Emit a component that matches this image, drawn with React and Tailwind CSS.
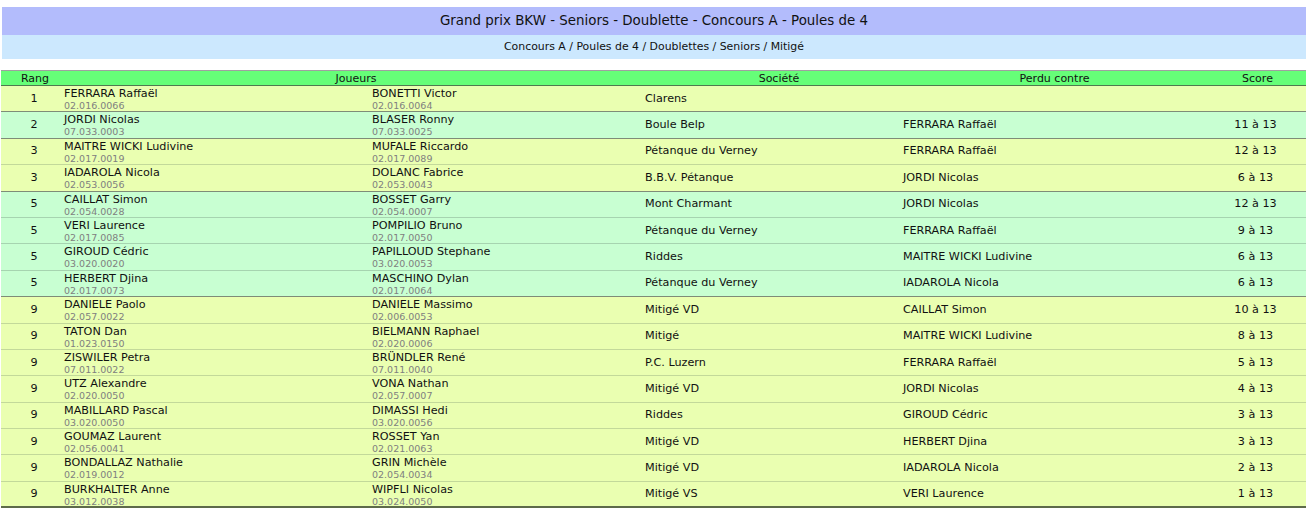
const ROWS = [
  ["1", "FERRARA Raffaël", "02.016.0066", "BONETTI Victor", "02.016.0064", "Clarens", "", ""],
  ["2", "JORDI Nicolas", "07.033.0003", "BLASER Ronny", "07.033.0025", "Boule Belp", "FERRARA Raffaël", "11 à 13"],
  ["3", "MAITRE WICKI Ludivine", "02.017.0019", "MUFALE Riccardo", "02.017.0089", "Pétanque du Verney", "FERRARA Raffaël", "12 à 13"],
  ["3", "IADAROLA Nicola", "02.053.0056", "DOLANC Fabrice", "02.053.0043", "B.B.V. Pétanque", "JORDI Nicolas", "6 à 13"],
  ["5", "CAILLAT Simon", "02.054.0028", "BOSSET Garry", "02.054.0007", "Mont Charmant", "JORDI Nicolas", "12 à 13"],
  ["5", "VERI Laurence", "02.017.0085", "POMPILIO Bruno", "02.017.0050", "Pétanque du Verney", "FERRARA Raffaël", "9 à 13"],
  ["5", "GIROUD Cédric", "03.020.0020", "PAPILLOUD Stephane", "03.020.0053", "Riddes", "MAITRE WICKI Ludivine", "6 à 13"],
  ["5", "HERBERT Djina", "02.017.0073", "MASCHINO Dylan", "02.017.0064", "Pétanque du Verney", "IADAROLA Nicola", "6 à 13"],
  ["9", "DANIELE Paolo", "02.057.0022", "DANIELE Massimo", "02.006.0053", "Mitigé VD", "CAILLAT Simon", "10 à 13"],
  ["9", "TATON Dan", "01.023.0150", "BIELMANN Raphael", "02.020.0006", "Mitigé", "MAITRE WICKI Ludivine", "8 à 13"],
  ["9", "ZISWILER Petra", "07.011.0022", "BRÜNDLER René", "07.011.0040", "P.C. Luzern", "FERRARA Raffaël", "5 à 13"],
  ["9", "UTZ Alexandre", "02.020.0050", "VONA Nathan", "02.057.0007", "Mitigé VD", "JORDI Nicolas", "4 à 13"],
  ["9", "MABILLARD Pascal", "03.020.0050", "DIMASSI Hedi", "03.020.0056", "Riddes", "GIROUD Cédric", "3 à 13"],
  ["9", "GOUMAZ Laurent", "02.056.0041", "ROSSET Yan", "02.021.0063", "Mitigé VD", "HERBERT Djina", "3 à 13"],
  ["9", "BONDALLAZ Nathalie", "02.019.0012", "GRIN Michèle", "02.054.0034", "Mitigé VD", "IADAROLA Nicola", "2 à 13"],
  ["9", "BURKHALTER Anne", "03.012.0038", "WIPFLI Nicolas", "03.024.0050", "Mitigé VS", "VERI Laurence", "1 à 13"],
];

function Player({ name, licence }) {
  return (
    <div className="flex flex-col pl-[3px] pt-[2px]">
      <span className="text-[11.2px] leading-[12px] text-[#111]">{name}</span>
      <span className="text-[9.5px] leading-[12px] text-[#808080]">{licence}</span>
    </div>
  );
}

export default function App() {
  // group index -> alternating colours by rank
  let group = 0;
  const rows = ROWS.map((r, i) => {
    if (i > 0 && ROWS[i - 1][0] !== r[0]) group++;
    const last = i === ROWS.length - 1 || ROWS[i + 1][0] !== r[0];
    return { r, even: group % 2 === 0, last, end: i === ROWS.length - 1 };
  });

  return (
    <div className="w-[1308px] bg-white pt-[7px] font-['DejaVu_Sans',sans-serif] text-[#111]">
      <div className="mx-[2px] flex h-[28px] items-center justify-center bg-[#b3bcfc] text-[13.4px]">
        Grand prix BKW - Seniors - Doublette - Concours A - Poules de 4
      </div>
      <div className="mx-[2px] flex h-[24px] items-center justify-center bg-[#cce8fe] text-[10.9px]">
        Concours A / Poules de 4 / Doublettes / Seniors / Mitigé
      </div>

      <div className="mx-[1px] mt-[11px] w-[1305px]">
        <div className="grid h-[16px] grid-cols-[68px_574px_272px_295px_1fr] items-center border-t border-b border-t-[#a0a0a0] border-b-[#4f7a4f] bg-[#66fe78] text-center text-[11px] leading-[13px]">
          <div>Rang</div>
          <div>Joueurs</div>
          <div>Société</div>
          <div className="pr-[16px]">Perdu contre</div>
          <div className="pr-[1px]">Score</div>
        </div>

        {rows.map(({ r, even, last, end }, i) => (
          <div
            key={i}
            className={`grid h-[26.4px] grid-cols-[60px_308px_273px_258px_305px_1fr] items-stretch border-b ${
              even ? "bg-[#eaffb1]" : "bg-[#c8ffd2]"
            } ${end ? "border-b-2 border-b-[#5d6b4a]" : last ? "border-b-[#7f8c78]" : even ? "border-b-[#c3d99a]" : "border-b-[#a6d4b0]"}`}
          >
            <div className="flex items-center justify-center pl-[6px] text-[11.2px]">{r[0]}</div>
            <Player name={r[1]} licence={r[2]} />
            <Player name={r[3]} licence={r[4]} />
            <div className="flex items-center pl-[3px] text-[11.2px]">{r[5]}</div>
            <div className="flex items-center pl-[3px] text-[11.2px]">{r[6]}</div>
            <div className="flex items-center justify-center text-[11.2px]">{r[7]}</div>
          </div>
        ))}
      </div>
    </div>
  );
}
